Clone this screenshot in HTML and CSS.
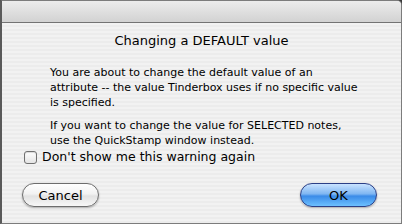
FILE: index.html
```html
<!DOCTYPE html>
<html>
<head>
<meta charset="utf-8">
<link rel="stylesheet" href="styles.css">
</head>
<body>
<div class="window">
  <div class="titlebar"></div>
  <div class="content">
    <h1 class="heading">Changing a DEFAULT value</h1>
    <div class="message">
      <p>You are about to change the default value of an attribute -- the value Tinderbox uses if no specific value is specified.</p>
      <p>If you want to change the value for SELECTED notes, use the QuickStamp window instead.</p>
    </div>
    <label class="check"><span class="box"></span><span class="check-label">Don't show me this warning again</span></label>
    <div class="buttons">
      <button class="btn cancel">Cancel</button>
      <button class="btn ok">OK</button>
    </div>
  </div>
</div>
</body>
</html>
```

FILE: styles.css
```css
html, body {
  margin: 0;
  padding: 0;
  background: #3a3a3a;
}
.window {
  width: 402px;
  height: 224px;
  box-sizing: border-box;
  border: 1px solid #7c7c7c;
  border-left: 2px solid #5a5a5a;
  border-top-right-radius: 5px;
  display: flex;
  flex-direction: column;
  overflow: hidden;
  background: repeating-linear-gradient(to bottom, #ececec 0 2px, #f2f2f2 2px 4px);
  font-family: "DejaVu Sans", "Lucida Grande", sans-serif;
  color: #000;
}
.titlebar {
  height: 21px;
  flex: none;
  background: linear-gradient(to bottom, #ececec, #d2d2d2);
  border-bottom: 1px solid #737373;
}
.content {
  flex: 1;
  display: flex;
  flex-direction: column;
}
.heading {
  margin: 10px 0 0;
  font-size: 13px;
  font-weight: normal;
  text-align: center;
  line-height: 16px;
}
.message {
  margin: 16px 0 0 48px;
  width: 310px;
  font-size: 11px;
  line-height: 15px;
}
.message p {
  margin: 0 0 8px;
}
.message p:last-child {
  margin-bottom: 0;
}
.check {
  display: flex;
  align-items: center;
  gap: 5px;
  margin: 1px 0 0 22px;
  font-size: 12.5px;
  line-height: 16px;
}
.box {
  width: 13px;
  height: 13px;
  box-sizing: border-box;
  border: 1px solid #707070;
  border-radius: 3px;
  background: linear-gradient(to bottom, #ffffff, #e4e4e4);
  box-shadow: inset 0 1px 1px rgba(0,0,0,0.15);
}
.buttons {
  display: flex;
  justify-content: space-between;
  margin: 18px 24px 0 20px;
}
.btn {
  width: 77px;
  height: 24px;
  border-radius: 12px;
  font-family: "DejaVu Sans", "Lucida Grande", sans-serif;
  font-size: 13px;
  color: #000;
  padding: 0;
  box-shadow: 0 1px 2px rgba(0,0,0,0.3);
}
.cancel {
  border: 1px solid #6d6d6d;
  background: linear-gradient(to bottom, #ffffff 0%, #f2f2f2 45%, #e2e2e2 55%, #f7f7f7 100%);
}
.ok {
  border: 1px solid #2b3f86;
  background: linear-gradient(to bottom, #c9e3ff 0%, #7fb6f2 45%, #3b8be8 55%, #6cc0ff 100%);
}
```
